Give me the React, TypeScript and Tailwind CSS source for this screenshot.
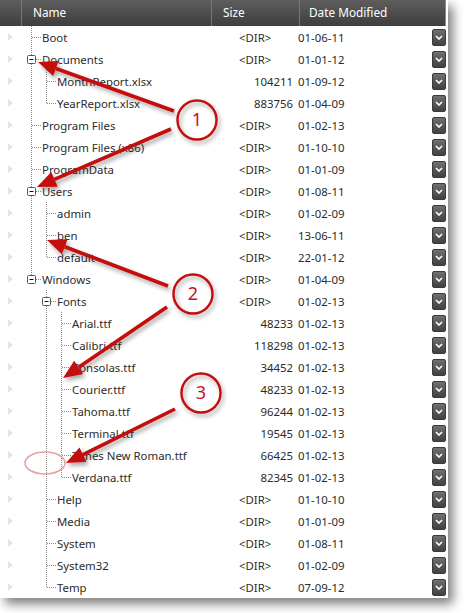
import React from "react";

type Node = { name: string; size?: string; date: string; children?: Node[] };

const tree: Node[] = [
  { name: "Boot", date: "01-06-11" },
  {
    name: "Documents",
    date: "01-01-12",
    children: [
      { name: "MonthReport.xlsx", size: "104211", date: "01-09-12" },
      { name: "YearReport.xlsx", size: "883756", date: "01-04-09" },
    ],
  },
  { name: "Program Files", date: "01-02-13" },
  { name: "Program Files (x86)", date: "01-10-10" },
  { name: "ProgramData", date: "01-01-09" },
  {
    name: "Users",
    date: "01-08-11",
    children: [
      { name: "admin", date: "01-02-09" },
      { name: "ben", date: "13-06-11" },
      { name: "default", date: "22-01-12" },
    ],
  },
  {
    name: "Windows",
    date: "01-04-09",
    children: [
      {
        name: "Fonts",
        date: "01-02-13",
        children: [
          { name: "Arial.ttf", size: "48233", date: "01-02-13" },
          { name: "Calibri.ttf", size: "118298", date: "01-02-13" },
          { name: "Consolas.ttf", size: "34452", date: "01-02-13" },
          { name: "Courier.ttf", size: "48233", date: "01-02-13" },
          { name: "Tahoma.ttf", size: "96244", date: "01-02-13" },
          { name: "Terminal.ttf", size: "19545", date: "01-02-13" },
          { name: "Times New Roman.ttf", size: "66425", date: "01-02-13" },
          { name: "Verdana.ttf", size: "82345", date: "01-02-13" },
        ],
      },
      { name: "Help", date: "01-10-10" },
      { name: "Media", date: "01-01-09" },
      { name: "System", date: "01-08-11" },
      { name: "System32", date: "01-02-09" },
      { name: "Temp", date: "07-09-12" },
    ],
  },
];

type Row = Node & { guides: boolean[]; last: boolean; expanded: boolean };

function flatten(nodes: Node[], guides: boolean[] = []): Row[] {
  return nodes.flatMap((n, i) => {
    const last = i === nodes.length - 1;
    const row: Row = { ...n, guides, last, expanded: !!n.children };
    return [row, ...(n.children ? flatten(n.children, [...guides, !last]) : [])];
  });
}

const rows = flatten(tree);

function Guide({ on }: { on: boolean }) {
  return (
    <svg width="15" height="22" className="shrink-0">
      {on && <line x1="7.5" y1="0" x2="7.5" y2="22" stroke="#8a8a8a" strokeDasharray="1 1" />}
    </svg>
  );
}

function Connector({ last, expanded }: { last: boolean; expanded: boolean }) {
  return (
    <svg width="18" height="22" className="shrink-0">
      <line x1="7.5" y1="0" x2="7.5" y2={last ? 11 : 22} stroke="#8a8a8a" strokeDasharray="1 1" />
      <line x1="8" y1="11.5" x2="18" y2="11.5" stroke="#8a8a8a" strokeDasharray="1 1" />
      {expanded && (
        <g>
          <rect x="3.5" y="7.5" width="8" height="8" fill="#fff" stroke="#555" rx="1" />
          <line x1="5.5" y1="11.5" x2="9.5" y2="11.5" stroke="#111" />
        </g>
      )}
    </svg>
  );
}

function DropButton() {
  return (
    <div className="flex h-[17px] w-[14px] items-center justify-center rounded-[2px] border border-[#3a3a3a] bg-gradient-to-b from-[#707070] to-[#414141]">
      <svg width="8" height="5" viewBox="0 0 8 5">
        <path d="M1 1 L4 4 L7 1" fill="none" stroke="#fff" strokeWidth="1.6" />
      </svg>
    </div>
  );
}

function Annotations() {
  const arrows = [
    [174, 111, 38, 62],
    [171, 129, 37, 187],
    [168, 286, 47, 240],
    [167, 307, 63, 378],
    [175, 409, 66, 463],
  ];
  const circles = [
    [197, 120, "1"],
    [193, 294, "2"],
    [201, 393, "3"],
  ] as const;
  return (
    <svg className="pointer-events-none absolute left-0 top-0" width="464" height="613">
      <defs>
        <filter id="sh" x="-20%" y="-20%" width="140%" height="140%">
          <feDropShadow dx="2" dy="3" stdDeviation="2" floodColor="#000" floodOpacity="0.35" />
        </filter>
      </defs>
      <ellipse cx="45" cy="463" rx="20" ry="11" fill="none" stroke="#e38a8a" strokeWidth="1.6" opacity="0.8" />
      {arrows.map(([x1, y1, x2, y2], i) => {
        const a = Math.atan2(y2 - y1, x2 - x1);
        const len = 19;
        const w = 8;
        const bx = x2 - len * Math.cos(a);
        const by = y2 - len * Math.sin(a);
        const px = -Math.sin(a) * w;
        const py = Math.cos(a) * w;
        return (
          <g key={i} filter="url(#sh)">
            <line x1={x1} y1={y1} x2={bx} y2={by} stroke="#c40a0a" strokeWidth="3.6" />
            <polygon points={`${x2},${y2} ${bx + px},${by + py} ${bx - px},${by - py}`} fill="#c40a0a" />
          </g>
        );
      })}
      {circles.map(([cx, cy, t]) => (
        <g key={t}>
          <circle cx={cx} cy={cy} r="19.5" fill="none" stroke="#c40a0a" strokeWidth="2.4" filter="url(#sh)" />
          <text
            x={cx}
            y={cy + 6}
            textAnchor="middle"
            fontSize="18"
            fill="#c8102e"
            fontFamily="'Noto Sans', sans-serif"
          >
            {t}
          </text>
        </g>
      ))}
    </svg>
  );
}

export default function App() {
  return (
    <div className="relative h-[613px] w-[464px] bg-white font-['Noto_Sans',sans-serif] text-[11.4px]">
      <div className="w-[448px] bg-white shadow-[5px_6px_10px_rgba(0,0,0,0.5)]">
        <div className="flex h-[26px] w-[446px] items-center border-r border-[#8a8a8a] bg-gradient-to-b from-[#5e5e5e] to-[#3e3e3e] text-[11.8px] text-white">
          <div className="h-full w-[22px] border-r border-[#777]" />
          <div className="flex h-full w-[190px] items-center border-r border-[#777] pl-[11px]">Name</div>
          <div className="flex h-full w-[88px] items-center border-r border-[#777] pl-[11px]">Size</div>
          <div className="flex h-full flex-1 items-center pl-[9px]">Date Modified</div>
        </div>
        {rows.map((r) => (
          <div key={r.name} className="flex h-[22px] items-center text-[#2b2b2b]">
            <div className="flex w-[22px] items-center pl-[8px]">
              <svg width="5" height="8">
                <path d="M0 0 L5 4 L0 8 Z" fill="#e4e4e4" />
              </svg>
            </div>
            <div className="flex h-full w-[190px] items-center pl-[2px]">
              {r.guides.map((g, i) => (
                <Guide key={i} on={g} />
              ))}
              <Connector last={r.last} expanded={r.expanded} />
              <span className="whitespace-nowrap pt-[2px]">{r.name}</span>
            </div>
            {r.size ? (
              <div className="w-[84px] pr-[3px] pt-[2px] text-right">{r.size}</div>
            ) : (
              <div className="w-[84px] pl-[27px] pt-[2px]">&lt;DIR&gt;</div>
            )}
            <div className="flex-1 pl-[2px] pt-[2px]">{r.date}</div>
            <div className="mr-[2px]">
              <DropButton />
            </div>
          </div>
        ))}
      </div>
      <Annotations />
    </div>
  );
}
